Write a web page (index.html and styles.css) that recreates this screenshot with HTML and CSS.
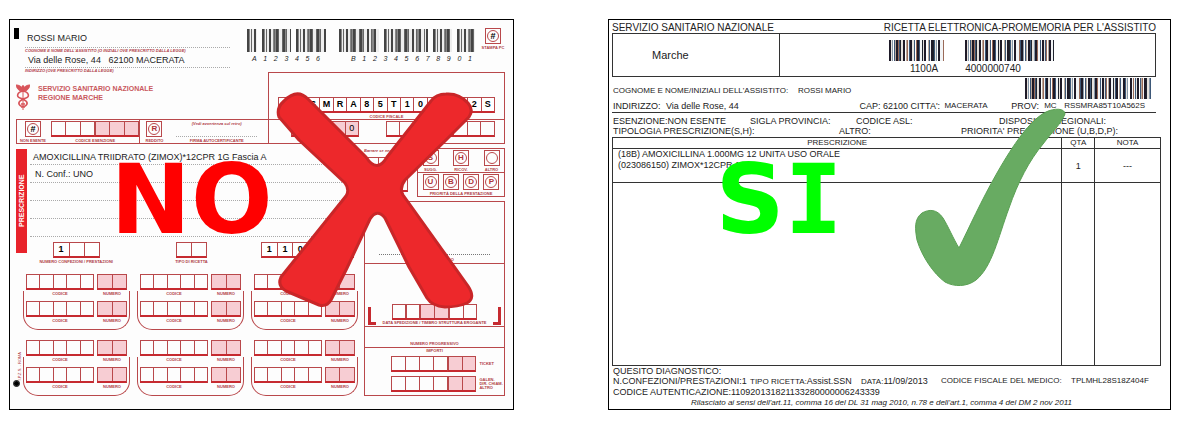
FILE: index.html
```html
<!DOCTYPE html>
<html lang="it">
<head>
<meta charset="utf-8">
<title>Ricetta elettronica</title>
<link rel="stylesheet" href="styles.css">
</head>
<body>
<main class="compare">

<section class="sheet red-form">
  <header class="rf-top">
    <span class="mark"></span>
    <div class="patient">
      <p class="typed">ROSSI MARIO</p>
      <p class="cap ital">COGNOME E NOME DELL'ASSISTITO (O INIZIALI OVE PRESCRITTO DALLA LEGGE)</p>
      <p class="typed addr">Via delle Rose, 44 &nbsp; 62100 MACERATA</p>
      <p class="cap ital">INDIRIZZO (OVE PRESCRITTO DALLA LEGGE)</p>
    </div>
    <div class="code code-a">
      <div class="bars"><span class="grey-bars w10"></span><span class="grey-bars w28"></span><span class="grey-bars w30"></span></div>
      <div class="digits"><span>A</span><span>1</span><span>2</span><span>3</span><span>4</span><span>5</span><span>6</span></div>
    </div>
    <div class="code code-b">
      <div class="bars"><span class="grey-bars w39"></span><span class="grey-bars w44"></span><span class="grey-bars w18"></span><span class="grey-bars w18"></span></div>
      <div class="digits"><span>B</span><span>1</span><span>2</span><span>3</span><span>4</span><span>5</span><span>6</span><span>7</span><span>8</span><span>9</span><span>0</span><span>1</span></div>
    </div>
    <div class="tick stamp"><span class="ring hash">#</span><p class="cap">STAMPA PC</p></div>
  </header>

  <div class="rf-brand">
    <div class="brand">
      <svg class="caduceus" viewBox="0 0 14 27" aria-hidden="true">
        <path d="M7 1v25M0 1c3 0 5 1 7 4 2-3 4-4 7-4-1 4-3 6-6 6H6C3 7 1 5 0 1z" fill="#d8545a" stroke="#d8545a"/>
        <path d="M7 7c-6 1-7 6-3 7l3 1 3 2c3 3-1 6-3 5M7 7c6 1 7 6 3 7l-3 1-3 2c-3 3 1 6 3 5M5 20h4M5 23h4" fill="none" stroke="#d8545a" stroke-width="1.6"/>
        <circle cx="7" cy="3" r="1.6" fill="#d8545a"/>
      </svg>
      <p>SERVIZIO SANITARIO NAZIONALE<br>REGIONE MARCHE</p>
    </div>
    <div class="fiscal">
      <div class="letters"><span>R</span><span>S</span><span>S</span><span>M</span><span>R</span><span>A</span><span>8</span><span>5</span><span>T</span><span>1</span><span>0</span><span>A</span><span>5</span><span>6</span><span>2</span><span>S</span></div>
      <p class="cap">CODICE FISCALE</p>
    </div>
  </div>

  <div class="rf-exempt">
    <div class="ex-a">
      <div class="tick"><span class="ring hash">#</span><p class="cap">NON ESENTE</p></div>
      <div class="stack"><div class="pair even"><span class="cells n3"></span><span class="cells n3 pink"></span></div><p class="cap">CODICE ESENZIONE</p></div>
    </div>
    <div class="ex-b">
      <div class="tick"><span class="ring">R</span><p class="cap">REDDITO</p></div>
      <div class="stack sign"><p class="cap ital">(Vedi avvertenza sul retro)</p><span class="dots"></span><p class="cap">FIRMA AUTOCERTIFICANTE</p></div>
    </div>
    <div class="ex-c">
      <div class="stack"><div class="letters pink"><span></span><span></span><span></span><span></span><span class="zero">0</span></div><p class="cap start">SIGLA PROVINCIA</p></div>
      <div class="stack"><span class="cells n8"></span></div>
    </div>
  </div>

  <div class="rf-main">
    <div class="rf-left">
      <div class="presc">
        <h2 class="presc-bar">PRESCRIZIONE</h2>
        <div class="presc-body">
          <div class="lines">
            <p>AMOXICILLINA TRIIDRATO (ZIMOX)*12CPR 1G Fascia A</p>
            <p class="in">N. Conf.: UNO</p>
            <p></p><p></p><p></p>
          </div>
          <div class="counts">
            <div class="stack"><div class="letters c3"><span>1</span><span></span><span></span></div><p class="cap">NUMERO CONFEZIONI / PRESTAZIONI</p></div>
            <div class="stack"><span class="cells n2 c2"></span><p class="cap">TIPO DI RICETTA</p></div>
            <div class="stack"><div class="letters"><span>1</span><span>1</span><span>0</span><span></span><span></span><span></span></div></div>
          </div>
        </div>
      </div>
      <div class="side"><span class="vert cap">I.P.Z.S. - ROMA</span><span class="dot"></span></div>
      <div class="groups">
        <div class="group">
          <div class="pair"><span class="cells n5"></span><span class="cells n2 pink"></span><p class="cap">CODICE</p><p class="cap">NUMERO</p></div>
          <div class="pair"><span class="cells n5"></span><span class="cells n2 pink"></span><p class="cap">CODICE</p><p class="cap">NUMERO</p></div>
        </div>
        <div class="group">
          <div class="pair"><span class="cells n5"></span><span class="cells n2 pink"></span><p class="cap">CODICE</p><p class="cap">NUMERO</p></div>
          <div class="pair"><span class="cells n5"></span><span class="cells n2 pink"></span><p class="cap">CODICE</p><p class="cap">NUMERO</p></div>
        </div>
        <div class="group">
          <div class="pair"><span class="cells n5"></span><span class="cells n2 pink"></span><p class="cap">CODICE</p><p class="cap">NUMERO</p></div>
          <div class="pair"><span class="cells n5"></span><span class="cells n2 pink"></span><p class="cap">CODICE</p><p class="cap">NUMERO</p></div>
        </div>
        <div class="group">
          <div class="pair"><span class="cells n5"></span><span class="cells n2 pink"></span><p class="cap">CODICE</p><p class="cap">NUMERO</p></div>
          <div class="pair"><span class="cells n5"></span><span class="cells n2 pink"></span><p class="cap">CODICE</p><p class="cap">NUMERO</p></div>
        </div>
        <div class="group">
          <div class="pair"><span class="cells n5"></span><span class="cells n2 pink"></span><p class="cap">CODICE</p><p class="cap">NUMERO</p></div>
          <div class="pair"><span class="cells n5"></span><span class="cells n2 pink"></span><p class="cap">CODICE</p><p class="cap">NUMERO</p></div>
        </div>
        <div class="group">
          <div class="pair"><span class="cells n5"></span><span class="cells n2 pink"></span><p class="cap">CODICE</p><p class="cap">NUMERO</p></div>
          <div class="pair"><span class="cells n5"></span><span class="cells n2 pink"></span><p class="cap">CODICE</p><p class="cap">NUMERO</p></div>
        </div>
      </div>
    </div>

    <div class="rf-right">
      <div class="options">
        <div class="opt-left"><p class="cap ital start">Barrare se necessario</p><span class="cells n3"></span><span class="cells n3"></span></div>
        <div class="opt-box">
          <div class="opt-row three">
            <div class="tick"><span class="ring">S</span><p class="cap">SUGG.</p></div>
            <div class="tick"><span class="ring">H</span><p class="cap">RICOV.</p></div>
            <div class="tick"><span class="ring"></span><p class="cap">ALTRO</p></div>
          </div>
          <div class="opt-row four">
            <span class="ring">U</span><span class="ring">B</span><span class="ring">D</span><span class="ring">P</span>
            <p class="cap">PRIORITÀ DELLA PRESTAZIONE</p>
          </div>
        </div>
      </div>
      <div class="office">
        <div class="doctor"><span class="dots"></span><p class="cap">FIRMA DEL MEDICO</p></div>
        <div class="dispense">
          <div class="dispense-row"><span class="bracket"></span><div class="trio"><span class="cells n2"></span><span class="cells n2 pink"></span><span class="cells n2"></span></div><span class="bracket right"></span></div>
          <p class="cap">DATA SPEDIZIONE / TIMBRO STRUTTURA EROGANTE</p>
        </div>
        <p class="cap progress">NUMERO PROGRESSIVO</p>
        <div class="amounts">
          <p class="cap">IMPORTI</p>
          <div class="amount"><div class="fee"><span class="cells n4"></span><span class="cells n2 pink"></span></div><p class="cap start">TICKET</p></div>
          <div class="amount"><div class="fee"><span class="cells n4"></span><span class="cells n2 pink"></span></div><p class="cap start">GALEN.<br>DIR. CHIAM.<br>ALTRO</p></div>
        </div>
      </div>
    </div>
  </div>

  <strong class="verdict no">NO</strong>
  <svg class="sign-over" viewBox="10 20 503 389" preserveAspectRatio="none" aria-hidden="true">
    <path d="M279 117Q276 108 284 101Q297 88 308 99L366 157Q377 174 387 157L431 101Q436 94 446 94Q459 93 468 103Q474 110 469 117L446 140L405 180Q399 188 403 195L468 286Q476 298 467 303Q458 307 445 307Q432 306 427 298L409 267L385 218Q377 208 370 219L347 268L331 300Q327 307 319 305L286 291Q277 286 281 277L346 196Q350 190 345 183L299 140Z" fill="#ed282b" stroke="#c92628" stroke-width="3" stroke-linejoin="round"/>
  </svg>
</section>

<section class="sheet memo">
  <div class="m-title"><h1>SERVIZIO SANITARIO NAZIONALE</h1><h1>RICETTA ELETTRONICA-PROMEMORIA PER L'ASSISTITO</h1></div>
  <div class="m-region">
    <p class="region">Marche</p>
    <div class="m-codes">
      <div class="m-code"><span class="ink-bars"></span><p class="centre">1100A</p></div>
      <div class="m-code wide"><span class="ink-bars"></span><p>4000000740</p></div>
    </div>
  </div>
  <div class="m-person"><p>COGNOME E NOME/INIZIALI DELL'ASSISTITO:</p><p>ROSSI MARIO</p><span class="ink-bars"></span></div>
  <div class="m-address"><p>INDIRIZZO:</p><p>Via delle Rose, 44</p><p>CAP: 62100 CITTA':</p><p class="s8">MACERATA</p><p>PROV:</p><p class="s8">MC</p><p class="s8">RSSMRA85T10A562S</p></div>
  <div class="m-line exempt"><p>ESENZIONE:NON ESENTE</p><p>SIGLA PROVINCIA:</p><p>CODICE ASL:</p><p>DISPOSITIVI REGIONALI:</p></div>
  <div class="m-line kind"><p>TIPOLOGIA PRESCRIZIONE(S,H):</p><p>ALTRO:</p><p>PRIORITA' PRESCRIZIONE (U,B,D,P):</p></div>
  <table class="m-table">
    <colgroup><col class="c-drug"><col class="c-qty"><col class="c-note"></colgroup>
    <thead><tr><th>PRESCRIZIONE</th><th>QTA</th><th>NOTA</th></tr></thead>
    <tbody>
      <tr class="item"><td>(18B) AMOXICILLINA 1.000MG 12 UNITA USO ORALE<br>(023086150) ZIMOX*12CPR 1G</td><td>1</td><td>---</td></tr>
      <tr class="blank"><td></td><td></td><td></td></tr>
    </tbody>
  </table>
  <div class="m-foot">
    <p>QUESITO DIAGNOSTICO:</p>
    <div class="m-refs"><p>N.CONFEZIONI/PRESTAZIONI:1</p><p><span class="s8">TIPO RICETTA:</span>Assist.SSN</p><p><span class="s8">DATA:</span>11/09/2013</p><p class="s8">CODICE FISCALE DEL MEDICO:</p><p class="s8">TPLMHL28S18Z404F</p></div>
    <p>CODICE AUTENTICAZIONE:110920131821133280000006243339</p>
    <p class="law">Rilasciato ai sensi dell'art.11, comma 16 del DL 31 mag 2010, n.78 e dell'art.1, comma 4 del DM 2 nov 2011</p>
  </div>
  <strong class="verdict si">S<span>I</span></strong>
  <svg class="sign-over" viewBox="609 20 561 389" preserveAspectRatio="none" aria-hidden="true">
    <path d="M1065 114C1065 108 1054 108 1046 112C1030 120 1013 145 997 173C981 201 969 228 959 248C953 238 948 226 943 218C937 209 929 209 922 213C914 219 915 229 917 240C922 257 934 274 945 282C954 287 967 287 976 280C992 267 998 238 1009 208C1018 182 1029 161 1043 144C1052 132 1061 124 1065 114Z" fill="#68ab62" stroke="#5aa053" stroke-width="1"/>
  </svg>
</section>

</main>
</body>
</html>
```

FILE: styles.css
```css
* { box-sizing: border-box; }
body, p, h1, h2 { margin: 0; font-size: inherit; font-weight: inherit; }
body {
  background: #fff;
  color: #222;
  font-family: "Liberation Sans", Arial, sans-serif;
  font-size: 9px;
  line-height: 10px;
  white-space: nowrap;
}
.compare {
  display: grid;
  grid-template-columns: minmax(0, 505fr) minmax(0, 563fr);
  gap: 94px;
  padding: 19px 10px 19px 9px;
}
.sheet { position: relative; border: 1px solid #000; overflow: hidden; }

/* Red paper form */
.red-form { --line: #b9484b; --hard: #c62a30; padding: 8px 8px 11px 6px; background: #fdfdfd; }
.cap { color: #b04048; font-size: 4px; line-height: 5px; font-weight: bold; text-align: center; }
.cap.start { text-align: left; }
.cap.ital { font-style: italic; text-align: left; }
.tick { display: flex; flex-direction: column; align-items: center; gap: 1px; }
.ring {
  position: relative;
  display: grid;
  place-items: center;
  width: 16px;
  height: 16px;
  border: 1px solid var(--line);
  color: #b0343a;
  font-size: 8px;
  font-weight: bold;
}
.ring::after { content: ""; position: absolute; inset: 1px; border: 1px solid var(--line); border-radius: 50%; }
.ring.hash { color: #000; font-size: 9px; }
.stack { display: grid; gap: 1px; align-content: start; justify-items: center; }
.stack > div, .stack > .cells { width: 100%; }
.cells {
  display: block;
  height: 16px;
  border: 1px solid var(--line);
  border-bottom: 2px solid var(--hard);
  border-left: 0;
  background: repeating-linear-gradient(to right, var(--line) 0 1px, var(--fill, transparent) 1px calc(100% / var(--n)));
}
.n2 { --n: 2; }
.n3 { --n: 3; }
.n4 { --n: 4; }
.n5 { --n: 5; }
.n8 { --n: 8; }
.pink { --fill: #f7cdd3; }
.letters {
  display: grid;
  grid-auto-flow: column;
  grid-auto-columns: minmax(0, 1fr);
  height: 16px;
  border: 1px solid var(--line);
  border-bottom: 2px solid var(--hard);
  background: var(--fill, #fff);
  color: #000;
  font-weight: bold;
  line-height: 13px;
  text-align: center;
}
.letters span + span { border-left: 1px solid var(--line); }
.letters .zero { font-weight: normal; }
.dots { display: block; border-bottom: 1px dotted #aaa; }

.rf-top {
  display: grid;
  grid-template-columns: 5px minmax(0, 205fr) minmax(0, 82fr) minmax(0, 139fr) 20px;
  column-gap: 10px;
  height: 44px;
  margin-left: -2px;
}
.mark { height: 11px; background: #000; }
.patient { margin-left: -4px; margin-right: 4px; }
.patient .typed { padding-left: 2px; line-height: 18px; border-bottom: 1px dotted #aaa; padding-top: 1px; }
.patient .addr { padding-top: 0; line-height: 14px; padding-left: 3px; }
.code { padding-left: 3px; }
.stamp { padding-right: 4px; }
.bars { display: flex; justify-content: space-between; gap: 5px; padding-top: 1px; }
.grey-bars {
  height: 23px;
  background:
    repeating-linear-gradient(to right, #444 0 2px, transparent 2px 7px),
    repeating-linear-gradient(to right, #666 0 1px, transparent 1px 4px),
    repeating-linear-gradient(to right, #888 0 3px, #eee 3px 11px);
}
.w10 { flex: 10; } .w18 { flex: 18; } .w28 { flex: 28; } .w30 { flex: 30; } .w39 { flex: 39; } .w44 { flex: 44; }
.digits { display: flex; justify-content: space-between; padding: 3px 6px 0 5px; font-size: 7px; line-height: 8px; font-style: italic; color: #222; }
.code-b .digits { padding-left: 12px; padding-right: 3px; }

.rf-brand { display: grid; grid-template-columns: minmax(0, 252fr) minmax(0, 237fr); height: 47px; }
.brand { display: flex; gap: 8px; padding-top: 12px; color: #c9595d; font-size: 7px; line-height: 9px; font-weight: bold; }
.caduceus { width: 14px; height: 27px; }
.fiscal { display: grid; gap: 1px; align-content: end; padding: 0 9px; border: 1px solid var(--line); border-bottom: 0; }

.rf-exempt { display: grid; grid-template-columns: minmax(0, 123fr) minmax(0, 129fr) minmax(0, 237fr); border: 1px solid var(--line); height: 25px; }
.rf-exempt > div { display: grid; padding-top: 1px; }
.rf-exempt > div + div { border-left: 1px solid var(--line); }
.ex-a { grid-template-columns: 32px 1fr; gap: 2px; }
.ex-b { grid-template-columns: 28px 1fr; gap: 8px; padding-right: 11px; }
.sign .dots { width: 100%; height: 10px; }
.ex-c { grid-template-columns: minmax(0, 68fr) minmax(0, 109fr); gap: 27px; padding: 0 9px 0 22px; }
.pair { display: grid; grid-template-columns: minmax(0, 68fr) minmax(0, 30fr); gap: 1px 3px; }
.pair.even { grid-template-columns: 1fr 1fr; gap: 0; }

.rf-main { display: grid; grid-template-columns: minmax(0, 342fr) minmax(0, 141fr); gap: 6px; padding-top: 4px; }
.rf-left { display: grid; grid-template-columns: 7px minmax(0, 1fr); row-gap: 10px; padding-top: 1px; }
.presc { grid-column: 1 / -1; display: grid; grid-template-columns: 11px minmax(0, 1fr); gap: 3px; }
.presc-bar {
  margin-bottom: 11px;
  writing-mode: vertical-rl;
  transform: rotate(180deg);
  background: #e8232b;
  color: #fff;
  font-size: 7px;
  line-height: 11px;
  font-weight: bold;
  text-align: center;
}
.lines p { height: 18px; padding: 4px 3px 0; border-bottom: 1px dotted #aaa; }
.lines p:first-child { height: 16px; padding-top: 3px; }
.lines .in { padding-left: 5px; }
.counts { display: grid; grid-template-columns: minmax(0, 86fr) minmax(0, 86fr) minmax(0, 87fr); column-gap: 23px; padding: 5px 4px 0 0; }
.stack > .c3 { width: 51%; }
.stack > .c2 { width: 34%; }
.side { display: flex; flex-direction: column; align-items: center; justify-content: flex-end; gap: 1px; padding-bottom: 10px; }
.vert { writing-mode: vertical-rl; transform: rotate(180deg); font-weight: normal; }
.dot { width: 5px; height: 5px; margin-left: -2px; flex: none; align-self: flex-start; border-radius: 50%; background: #000; outline: 1px solid #000; }
.groups { display: grid; grid-template-columns: repeat(3, minmax(0, 1fr)); gap: 10px 7px; }
.group { position: relative; display: grid; gap: 5px; padding: 0 3px 7px; }
.group::before { content: ""; position: absolute; inset: 17px 0 0; border: 1px solid var(--line); border-top: 0; border-radius: 0 0 15px 15px; }

.rf-right { display: flex; flex-direction: column; gap: 4px; }
.options { display: grid; grid-template-columns: minmax(0, 44fr) minmax(0, 88fr); gap: 9px; }
.opt-left { display: grid; align-content: space-between; padding-bottom: 5px; }
.opt-box { border: 1px solid var(--line); }
.opt-row { display: grid; justify-items: center; padding: 1px 5px 0; }
.three { grid-template-columns: 15px 15px 15px; justify-content: space-between; }
.four { grid-template-columns: repeat(4, 15px); justify-content: space-between; border-top: 1px solid var(--line); row-gap: 1px; }
.four .cap { grid-column: 1 / -1; }
.office { flex: 1; display: grid; grid-template-rows: 62fr 65fr 21fr 49fr; border: 1px solid var(--line); }
.office > * + * { border-top: 1px solid var(--line); }
.doctor { display: flex; flex-direction: column; justify-content: flex-end; padding: 0 14px 1px; }
.doctor .dots { border-color: #777; margin-bottom: 2px; }
.dispense { display: flex; flex-direction: column; justify-content: flex-end; padding-bottom: 1px; }
.dispense-row { display: grid; grid-template-columns: 8px minmax(0, 87fr) 8px; column-gap: 16px; padding: 0 3px; }
.bracket { height: 18px; margin: 3px 0 -5px; border: solid var(--hard); border-width: 0 0 3px 3px; }
.bracket.right { border-width: 0 3px 3px 0; }
.trio { display: grid; grid-template-columns: repeat(3, 1fr); }
.progress { padding-top: 14px; }
.amounts { display: grid; align-content: space-between; padding-bottom: 3px; }
.amount { display: grid; grid-template-columns: minmax(0, 87fr) minmax(0, 25fr); gap: 3px; padding-left: 26px; align-items: center; }
.fee { display: grid; grid-template-columns: 2fr 1fr; }
.amount .cap { line-height: 4px; }

/* Printed memo */
.memo { padding: 2px 9px 1px 3px; background: #fff; }
.m-title { display: flex; justify-content: space-between; font-size: 10px; line-height: 11px; padding-right: 5px; }
.m-region { display: grid; grid-template-columns: minmax(0, 167fr) minmax(0, 377fr); height: 44px; margin-right: 5px; border: 1px solid #333; font-size: 10px; }
.region { padding: 16px 39px 0; font-size: 11px; }
.m-codes { display: grid; grid-template-columns: minmax(0, 54fr) minmax(0, 87fr); column-gap: 21px; padding: 6px 27% 0 29%; border-left: 1px solid #333; }
.m-code { display: grid; gap: 3px; align-content: start; }
.centre { text-align: right; padding-right: 6px; }
.ink-bars {
  height: 21px;
  background:
    repeating-linear-gradient(to right, #1e1a28 0 2px, transparent 2px 7px),
    repeating-linear-gradient(to right, #3d5878 0 1px, transparent 1px 5px),
    repeating-linear-gradient(to right, #9a6a58 0 1px, transparent 1px 9px),
    repeating-linear-gradient(to right, #20242e 0 1px, #e6e2de 1px 3px, #8899aa 3px 4px, #fff 4px 6px, #b9a89c 6px 7px, #f2f4f6 7px 11px);
}
.m-person { display: grid; grid-template-columns: minmax(0, 185fr) minmax(0, 228fr) minmax(0, 126fr) minmax(0, 10fr); font-size: 8px; padding-top: 1px; }
.m-person p { padding-top: 8px; padding-left: 1px; }
.m-address { display: grid; grid-template-columns: minmax(0, 53fr) minmax(0, 194fr) minmax(0, 85fr) minmax(0, 67fr) minmax(0, 33fr) minmax(0, 20fr) minmax(0, 92fr); margin-right: 5px; padding: 2px 0 1px 1px; border-bottom: 1px solid #333; }
.s8 { font-size: 8px; }
.m-line { display: grid; padding-left: 1px; }
.exempt { grid-template-columns: minmax(0, 137fr) minmax(0, 106fr) minmax(0, 143fr) minmax(0, 162fr); padding-top: 3px; }
.kind { grid-template-columns: minmax(0, 226fr) minmax(0, 122fr) minmax(0, 200fr); }
.m-table { width: 100%; table-layout: fixed; border-collapse: collapse; margin-top: 1px; }
.c-drug { width: 82%; }
.c-qty { width: 6%; }
.c-note { width: 12%; }
.m-table th, .m-table td { border: 1px solid #333; padding: 0; text-align: center; }
.m-table th { font-size: 8px; font-weight: normal; }
.item { height: 34px; }
.m-table .item td:first-child { text-align: left; vertical-align: top; padding-left: 5px; line-height: 11px; }
.blank { height: 183px; }
.m-foot { padding-left: 1px; }
.m-refs { display: grid; grid-template-columns: minmax(0, 137fr) minmax(0, 111fr) minmax(0, 80fr) minmax(0, 130fr) minmax(0, 90fr); }
.law { padding: 1px 0 0 78px; font-size: 8px; font-style: italic; }

/* Verdict marks laid over each sheet */
.verdict { position: absolute; top: 132px; font: bold 96px/96px "DejaVu Sans", Verdana, sans-serif; }
.no { left: 20%; color: #f00; }
.si { left: 19%; color: #0f0; }
.si span { font-family: "DejaVu Sans Mono", monospace; }
.sign-over { position: absolute; inset: 0; width: 100%; height: 100%; }
```
